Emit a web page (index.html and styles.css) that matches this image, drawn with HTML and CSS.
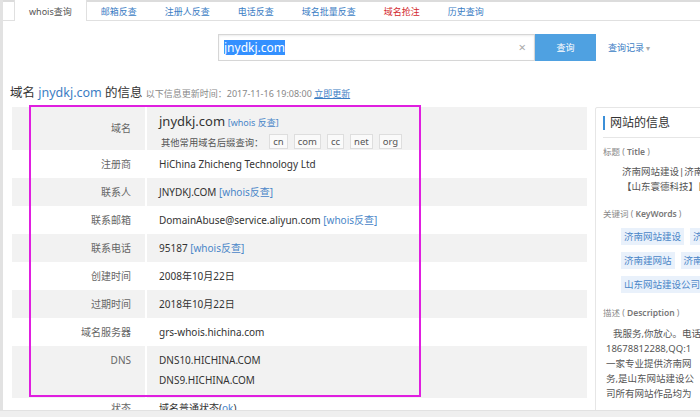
FILE: index.html
```html
<!DOCTYPE html>
<html lang="zh">
<head>
<meta charset="utf-8">
<title>whois查询</title>
<link rel="stylesheet" href="styles.css">
</head>
<body>
<div class="page">
  <nav class="tabs">
    <span class="tab active">whois查询</span>
    <span class="tab">邮箱反查</span>
    <span class="tab">注册人反查</span>
    <span class="tab">电话反查</span>
    <span class="tab">域名批量反查</span>
    <span class="tab hot">域名抢注</span>
    <span class="tab">历史查询</span>
  </nav>

  <div class="search">
    <div class="search-box">
      <span class="search-text">jnydkj.com</span>
      <span class="clear">×</span>
    </div>
    <button class="search-btn">查询</button>
    <span class="history">查询记录 <span class="caret">▾</span></span>
  </div>

  <h1 class="title">域名 <span class="blue">jnydkj.com</span> 的信息 <small class="updated">以下信息更新时间：2017-11-16 19:08:00 <a class="link-u">立即更新</a></small></h1>

  <div class="main">
    <div class="table">
      <div class="row gray tall">
        <div class="lab">域名</div>
        <div class="val">
          <div class="dom-line"><span class="dom">jnydkj.com</span> <a class="link">[whois 反查]</a></div>
          <div class="suffix">其他常用域名后缀查询：
            <span class="sfx">cn</span><span class="sfx">com</span><span class="sfx">cc</span><span class="sfx">net</span><span class="sfx">org</span>
          </div>
        </div>
      </div>
      <div class="row"><div class="lab">注册商</div><div class="val">HiChina Zhicheng Technology Ltd</div></div>
      <div class="row gray"><div class="lab">联系人</div><div class="val">JNYDKJ.COM <a class="link">[whois反查]</a></div></div>
      <div class="row"><div class="lab">联系邮箱</div><div class="val">DomainAbuse@service.aliyun.com <a class="link">[whois反查]</a></div></div>
      <div class="row gray"><div class="lab">联系电话</div><div class="val">95187 <a class="link">[whois反查]</a></div></div>
      <div class="row"><div class="lab">创建时间</div><div class="val">2008年10月22日</div></div>
      <div class="row gray"><div class="lab">过期时间</div><div class="val">2018年10月22日</div></div>
      <div class="row"><div class="lab">域名服务器</div><div class="val">grs-whois.hichina.com</div></div>
      <div class="row gray dns"><div class="lab">DNS</div><div class="val">DNS10.HICHINA.COM<br>DNS9.HICHINA.COM</div></div>
      <div class="row last"><div class="lab">状态</div><div class="val">域名普通状态(<a class="link">ok</a>)</div></div>
      <div class="mark"></div>
    </div>

    <aside class="panel">
      <h2 class="panel-head">网站的信息</h2>
      <div class="p-label first">标题 ( <b>Title</b> )</div>
      <p class="p-title">济南网站建设|济南网站制作<br>【山东寰德科技】【济南网站建设】</p>
      <div class="p-label kw">关键词 ( <b>KeyWords</b> )</div>
      <div class="tags">
        <div class="tag-row"><span class="tag">济南网站建设</span><span class="tag">济南网站制作</span></div>
        <div class="tag-row"><span class="tag">济南建网站</span><span class="tag">济南建站公司</span></div>
        <div class="tag-row"><span class="tag">山东网站建设公司</span></div>
      </div>
      <div class="p-label">描述 ( <b>Description</b> )</div>
      <p class="p-desc">我服务,你放心。电话：<br>18678812288,QQ:1<br>一家专业提供济南网<br>务,是山东网站建设公<br>司所有网站作品均为</p>
    </aside>
  </div>
  <div class="footbar"></div>
</div>
</body>
</html>
```
FILE: styles.css
```css
* { box-sizing: border-box; }
html, body { margin: 0; padding: 0; background: #fff; }
body {
  width: 700px;
  height: 417px;
  overflow: hidden;
  font-family: "Noto Sans", "Noto Sans CJK SC", sans-serif;
  color: #333;
}
.page {
  position: relative;
  width: 700px;
  height: 417px;
  border-left: 3px solid #e2e2e2;
}
a { text-decoration: none; }
.blue { color: #3b7dc4; }
.link { color: #4a86c8; }
.link-u { color: #3b7dc4; text-decoration: underline; }

/* tabs */
.tabs {
  display: flex;
  height: 21px;
  padding-left: 11px;
  border-top: 2px solid #dcdcdc;
  border-bottom: 1px solid #e0e0e0;
}
.tab {
  padding: 0 14px;
  font-size: 9px;
  line-height: 19px;
  color: #3b7dc4;
  white-space: nowrap;
}
.tab.active {
  color: #555;
  background: #fff;
  margin-top: -2px;
  padding-top: 2px;
  height: 21px;
  border-left: 1px solid #e0e0e0;
  border-right: 1px solid #e0e0e0;
}
.tab.hot { color: #d3282d; }

/* search */
.search {
  display: flex;
  align-items: center;
  margin-top: 12px;
  padding-left: 215px;
  height: 28px;
}
.search-box {
  width: 317px;
  height: 27px;
  border: 1px solid #d6d6d6;
  box-shadow: inset 0 1px 2px rgba(0,0,0,0.08);
  display: flex;
  align-items: center;
  justify-content: space-between;
  padding: 0 8px 0 5px;
}
.search-text {
  font-size: 12px;
  background: #3390ff;
  color: #fff;
  line-height: 15px;
}
.clear { color: #aaa; font-size: 13px; }
.search-btn {
  width: 61px;
  height: 27px;
  border: 0;
  background: #4fa1e1;
  color: #fff;
  font-family: inherit;
  font-size: 9px;
  padding: 0;
}
.history {
  margin-left: 12px;
  font-size: 9px;
  color: #3b7dc4;
}
.caret { color: #aaa; font-size: 8px; }

/* title */
.title {
  margin: 23px 0 0 7px;
  font-size: 12.5px;
  font-weight: normal;
  color: #333;
  line-height: 18px;
  white-space: nowrap;
}
.updated { font-size: 9px; color: #888; }

/* main */
.main {
  display: flex;
  align-items: flex-start;
  gap: 8px;
  margin-top: 4px;
  padding-left: 9px;
}
.table {
  position: relative;
  width: 575px;
  flex: none;
}
.row {
  display: grid;
  grid-template-columns: 135px 1fr;
  height: 28px;
  background: #fff;
  font-size: 10px;
  line-height: 28px;
}
.row.gray { background: #f2f2f2; }
.lab {
  text-align: right;
  padding-right: 14px;
  color: #666;
  border-right: 2px solid #fff;
  white-space: nowrap;
}
.val {
  padding-left: 12px;
  color: #333;
  white-space: nowrap;
}
.row.tall { height: 43px; }
.row.tall .lab { line-height: 43px; }
.row.tall .val { padding-top: 4px; line-height: normal; }
.dom-line { line-height: 20px; }
.dom { font-size: 13px; color: #333; }
.dom-line .link { font-size: 9px; }
.suffix {
  display: flex;
  align-items: center;
  font-size: 9.3px;
  color: #555;
  padding-left: 2px;
  height: 17px;
}
.sfx {
  margin-left: 6px;
  padding: 0 3px;
  border: 1px solid #dedede;
  background: #fafafa;
  color: #555;
  font-size: 9.5px;
  line-height: 13px;
}
.row.dns { height: 52px; }
.row.dns .lab,
.row.dns .val { padding-top: 4px; line-height: 20px; }
.row.last .lab,
.row.last .val { line-height: 20px; padding-top: 0; }
.mark {
  position: absolute;
  left: 17px;
  top: -2px;
  width: 392px;
  height: 292px;
  border: 2px solid #e01ee0;
  pointer-events: none;
}

/* right panel */
.panel {
  width: 170px;
  flex: none;
  border: 1px solid #e6e6e6;
  border-radius: 2px;
  padding: 7px 0 20px 7px;
  height: 320px;
}
.panel-head {
  margin: 0;
  font-size: 12px;
  font-weight: normal;
  color: #333;
  line-height: 16px;
  padding: 0 0 6px 7px;
  border-bottom: 1px solid #e6e6e6;
  position: relative;
}
.panel-head::before {
  content: "";
  position: absolute;
  left: 0;
  top: 1px;
  width: 2px;
  height: 14px;
  background: #3b8fd8;
}
.p-label {
  font-size: 8.5px;
  color: #888;
  margin-top: 10px;
  line-height: 14px;
}
.p-label.first { margin-top: 7px; }
.p-label.kw { margin-top: 13px; }
.p-label b { font-weight: 600; color: #777; }
.p-title {
  margin: 5px 0 0 0;
  padding-left: 19px;
  font-size: 9.5px;
  line-height: 15px;
  color: #555;
  white-space: nowrap;
}
.tags {
  display: flex;
  flex-direction: column;
  align-items: flex-start;
  gap: 7px;
  padding-left: 18px;
  margin-top: 7px;
  margin-bottom: 13px;
}
.tag-row { display: flex; gap: 6px; }
.tag {
  background: #e9f1fb;
  color: #4a86c8;
  font-size: 9.5px;
  line-height: 17px;
  padding: 0 3px;
  white-space: nowrap;
}
.p-desc {
  margin: 6px 0 0 0;
  padding-left: 3px;
  text-indent: 7px;
  font-size: 9.5px;
  line-height: 15px;
  color: #555;
  white-space: nowrap;
}
.footbar {
  position: absolute;
  left: -3px;
  right: 0;
  bottom: 0;
  height: 7px;
  background: #efefef;
  border-top: 1px solid #e2e2e2;
}
```
